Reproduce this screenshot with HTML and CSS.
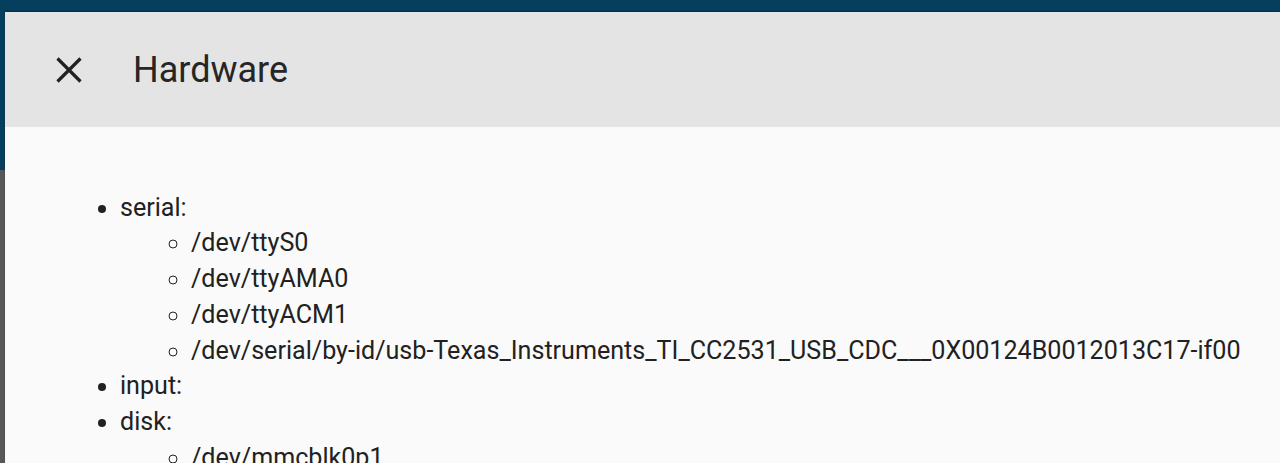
FILE: index.html
```html
<!DOCTYPE html>
<html>
<head>
<meta charset="utf-8">
<link rel="stylesheet" href="styles.css">
</head>
<body>
<div class="dialog">
  <header class="dialog-header">
    <button class="close-btn" aria-label="Close">
      <svg width="28" height="28" viewBox="0 0 28 28"><path d="M2.5 2.5L25.5 25.5M25.5 2.5L2.5 25.5" stroke="#212121" stroke-width="3.2" fill="none"/></svg>
    </button>
    <h1 class="dialog-title">Hardware</h1>
  </header>
  <div class="dialog-content">
    <ul class="hw-list">
      <li>serial:
        <ul>
          <li>/dev/ttyS0</li>
          <li>/dev/ttyAMA0</li>
          <li>/dev/ttyACM1</li>
          <li>/dev/serial/by-id/usb-Texas_Instruments_TI_CC2531_USB_CDC___0X00124B0012013C17-if00</li>
        </ul>
      </li>
      <li>input:</li>
      <li>disk:
        <ul>
          <li>/dev/mmcblk0p1</li>
        </ul>
      </li>
    </ul>
  </div>
</div>
</body>
</html>
```
FILE: styles.css
```css
html, body {
  margin: 0;
  padding: 0;
  height: 100%;
  overflow: hidden;
}
body {
  background: linear-gradient(to bottom, #063f5e 0, #063f5e 170px, #585858 170px);
  font-family: Roboto, "Liberation Sans", sans-serif;
  color: #212121;
}
.dialog {
  margin: 12px 0 0 5px;
  height: calc(100% - 12px);
  background: #fafafa;
  box-shadow: 0 -1px 2px rgba(0,0,0,0.3);
}
.dialog-header {
  height: 115px;
  background: #e4e4e4;
  display: flex;
  align-items: center;
  padding-left: 50px;
  box-sizing: border-box;
}
.close-btn {
  border: 0;
  background: none;
  padding: 0;
  width: 28px;
  height: 28px;
  display: flex;
  align-items: center;
  justify-content: center;
  margin-top: 1px;
}
.close-btn svg { display: block; }
.dialog-title {
  margin: 0 0 0 50px;
  font-size: 36px;
  font-weight: 400;
  color: #262626;
}
.dialog-content {
  padding: 62.5px 0 0 0;
}
.hw-list {
  margin: 0;
  padding-left: 115px;
  font-size: 25.1px;
  line-height: 35.8px;
  list-style: disc;
}
.hw-list ul {
  margin: 0;
  padding-left: 71px;
  list-style: circle;
}
```
